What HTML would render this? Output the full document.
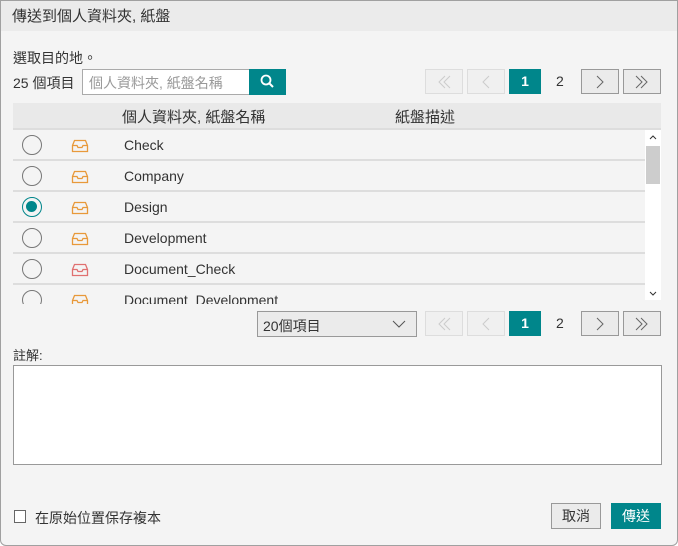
<!DOCTYPE html>
<html><head><meta charset="utf-8"><style>
*{box-sizing:border-box;margin:0;padding:0}
body{width:678px;height:546px;background:#fff;font-family:"Liberation Sans","Noto Sans CJK TC",sans-serif;font-size:14px;color:#333;position:relative;overflow:hidden}
.win{position:absolute;left:0;top:0;width:678px;height:546px;background:#f4f4f4;border-radius:0 0 6px 6px}
.frame{position:absolute;left:0;top:0;width:678px;height:546px;border:1px solid #a0a0a0;border-radius:0 0 6px 6px;pointer-events:none}
.title{position:absolute;left:0;top:0;width:678px;height:31px;background:#ebebeb;font-size:15px;padding:5px 12px;color:#333}
.a{position:absolute}
.btn{position:absolute;height:25px;border:1px solid #999;background:#ebebeb;text-align:center}
.dis{border-color:#ddd;background:#f0f0f0}
.pg1{position:absolute;width:32px;height:25px;background:#00868b;color:#fff;font-weight:bold;text-align:center;line-height:25px}
.row{position:absolute;left:13px;width:632px;height:31px;border-bottom:2px solid #ddd}
.radio{position:absolute;left:9px;top:5px;width:20px;height:20px;border:1.5px solid #777;border-radius:50%}
.row .t{position:absolute;left:111px;top:7px;font-size:14px;color:#333}
.row svg{position:absolute;left:58px;top:9px}
</style></head><body>
<div class="win">
<div class="title">傳送到個人資料夾, 紙盤</div>
<div class="a" style="left:13px;top:48px">選取目的地。</div>
<div class="a" style="left:13px;top:73px">25 個項目</div>
<div class="a" style="left:82px;top:69px;width:168px;height:26px;background:#fff;border:1px solid #aaa;color:#999;padding:3px 6px">個人資料夾, 紙盤名稱</div>
<div class="a" style="left:249px;top:69px;width:37px;height:26px;background:#00868b">
<svg width="37" height="26"><circle cx="17" cy="11" r="4.5" fill="none" stroke="#fff" stroke-width="1.8"/><line x1="20.5" y1="14.5" x2="24" y2="18" stroke="#fff" stroke-width="2"/></svg></div>
<div class="btn dis" style="left:425px;top:69px;width:38px"><svg width="36" height="23"><path d="M19 6l-6 6 6 6M24 6l-6 6 6 6" fill="none" stroke="#ccc"/></svg></div>
<div class="btn dis" style="left:467px;top:69px;width:38px"><svg width="36" height="23"><path d="M21 6l-6 6 6 6" fill="none" stroke="#ccc"/></svg></div>
<div class="pg1" style="left:509px;top:69px">1</div>
<div class="a" style="left:556px;top:73px">2</div>
<div class="btn" style="left:581px;top:69px;width:38px"><svg width="36" height="23"><path d="M15 6l6 6-6 6" fill="none" stroke="#666"/></svg></div>
<div class="btn" style="left:623px;top:69px;width:38px"><svg width="36" height="23"><path d="M12 6l6 6-6 6M17 6l6 6-6 6" fill="none" stroke="#666"/></svg></div>
<div class="a" style="left:13px;top:103px;width:648px;height:27px;background:#e9e9e9;border-bottom:2px solid #ddd"></div>
<div class="a" style="left:122px;top:106px;font-size:15px">個人資料夾, 紙盤名稱</div>
<div class="a" style="left:395px;top:106px;font-size:15px">紙盤描述</div>
<div class="a" style="left:0;top:130px;width:678px;height:174px;overflow:hidden">
<div class="row" style="top:0"><div class="radio"></div><svg width="18" height="14"><path d="M1.5 6.5l2-5h11l2 5v6h-15z M1.5 6.5h4.5l1 2h4l1-2h4.5" fill="none" stroke="#e8993a" stroke-width="1.3"/></svg><div class="t">Check</div></div>
<div class="row" style="top:31px"><div class="radio"></div><svg width="18" height="14"><path d="M1.5 6.5l2-5h11l2 5v6h-15z M1.5 6.5h4.5l1 2h4l1-2h4.5" fill="none" stroke="#e8993a" stroke-width="1.3"/></svg><div class="t">Company</div></div>
<div class="row" style="top:62px"><div class="radio" style="border:1.5px solid #00868b"><div style="position:absolute;left:3px;top:3px;width:11px;height:11px;border-radius:50%;background:#00868b"></div></div><svg width="18" height="14"><path d="M1.5 6.5l2-5h11l2 5v6h-15z M1.5 6.5h4.5l1 2h4l1-2h4.5" fill="none" stroke="#e8993a" stroke-width="1.3"/></svg><div class="t">Design</div></div>
<div class="row" style="top:93px"><div class="radio"></div><svg width="18" height="14"><path d="M1.5 6.5l2-5h11l2 5v6h-15z M1.5 6.5h4.5l1 2h4l1-2h4.5" fill="none" stroke="#e8993a" stroke-width="1.3"/></svg><div class="t">Development</div></div>
<div class="row" style="top:124px"><div class="radio"></div><svg width="18" height="14"><path d="M1.5 6.5l2-5h11l2 5v6h-15z M1.5 6.5h4.5l1 2h4l1-2h4.5" fill="none" stroke="#e07070" stroke-width="1.3"/></svg><div class="t">Document_Check</div></div>
<div class="row" style="top:155px"><div class="radio"></div><svg width="18" height="14"><path d="M1.5 6.5l2-5h11l2 5v6h-15z M1.5 6.5h4.5l1 2h4l1-2h4.5" fill="none" stroke="#e8993a" stroke-width="1.3"/></svg><div class="t">Document_Development</div></div>
<div class="a" style="left:645px;top:0;width:16px;height:170px;background:#fff">
<svg width="16" height="170"><path d="M5 9l3-3 3 3" fill="none" stroke="#333"/><rect x="1" y="16" width="14" height="38" fill="#cdcdcd"/><path d="M5 162l3 3 3-3" fill="none" stroke="#333"/></svg></div>
</div>
<div class="a" style="left:257px;top:311px;width:160px;height:26px;border:1px solid #999;background:#ebebeb;padding:4px 5px">20個項目<svg style="position:absolute;right:10px;top:8px" width="14" height="9"><path d="M1 1l6 6 6-6" fill="none" stroke="#555"/></svg></div>
<div class="btn dis" style="left:425px;top:311px;width:38px"><svg width="36" height="23"><path d="M19 6l-6 6 6 6M24 6l-6 6 6 6" fill="none" stroke="#ccc"/></svg></div>
<div class="btn dis" style="left:467px;top:311px;width:38px"><svg width="36" height="23"><path d="M21 6l-6 6 6 6" fill="none" stroke="#ccc"/></svg></div>
<div class="pg1" style="left:509px;top:311px">1</div>
<div class="a" style="left:556px;top:315px">2</div>
<div class="btn" style="left:581px;top:311px;width:38px"><svg width="36" height="23"><path d="M15 6l6 6-6 6" fill="none" stroke="#666"/></svg></div>
<div class="btn" style="left:623px;top:311px;width:38px"><svg width="36" height="23"><path d="M12 6l6 6-6 6M17 6l6 6-6 6" fill="none" stroke="#666"/></svg></div>
<div class="a" style="left:13px;top:345px;font-size:13px">註解:</div>
<div class="a" style="left:13px;top:365px;width:649px;height:100px;background:#fff;border:1px solid #999"></div>
<div class="a" style="left:14px;top:510px;width:12px;height:13px;border:1px solid #666;background:#fff"></div>
<div class="a" style="left:35px;top:508px">在原始位置保存複本</div>
<div class="btn" style="left:551px;top:503px;width:50px;height:26px;line-height:24px">取消</div>
<div class="a" style="left:611px;top:503px;width:50px;height:26px;background:#00868b;color:#fff;text-align:center;line-height:26px">傳送</div>
</div>
<div class="frame"></div>
</body></html>
